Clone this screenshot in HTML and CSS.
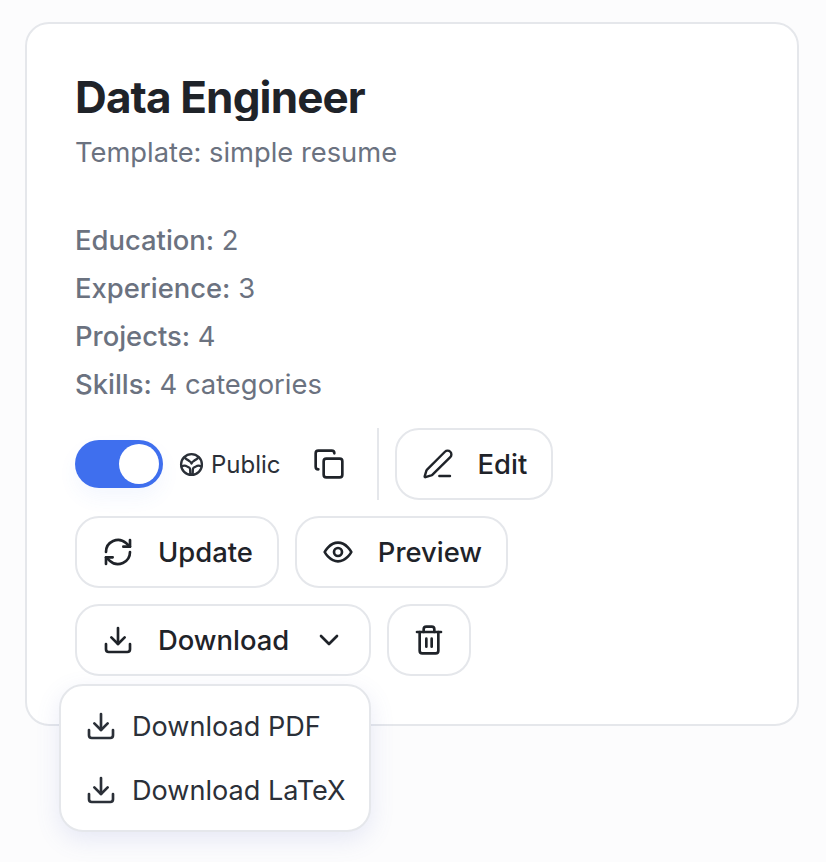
FILE: index.html
```html
<!DOCTYPE html>
<html lang="en">
<head>
<meta charset="utf-8">
<title>Data Engineer</title>
<link rel="stylesheet" href="styles.css">
</head>
<body>
<main class="card">
  <h1 class="title">Data Engineer</h1>
  <p class="template">Template: simple resume</p>
  <ul class="stats">
    <li><span class="label">Education:</span> 2</li>
    <li><span class="label">Experience:</span> 3</li>
    <li><span class="label">Projects:</span> 4</li>
    <li><span class="label">Skills:</span> 4 categories</li>
  </ul>
  <div class="actions">
    <div class="visibility">
      <span class="switch"><span class="knob"></span></span>
      <span class="public">
        <svg class="icon-globe" viewBox="0 0 24 24" fill="none" stroke="currentColor" stroke-width="2.200" stroke-linecap="round" stroke-linejoin="round"><circle cx="12" cy="12" r="10"/><path d="M5.500 5c1 2.500 2.500 2 3.500 3s2 1 3 3c1-2 2-2 3-3s2.500-.5 3.500-3"/><path d="M2.500 14c2-1.500 4-1 5.500 0s2 .5 2.500 2 0 3 .5 5.500M21.500 14c-2-1.500-4-1-5.500 0s-2 .5-2.500 2 0 3-.5 5.500"/></svg>
        Public
      </span>
      <button class="icon-only" aria-label="Copy">
        <svg class="icon" viewBox="0 0 24 24" fill="none" stroke="currentColor" stroke-width="2" stroke-linecap="round" stroke-linejoin="round"><rect x="8" y="8" width="14" height="14" rx="2"/><path d="M4 16c-1.100 0-2-.9-2-2V4c0-1.100.9-2 2-2h10c1.100 0 2 .9 2 2"/></svg>
      </button>
      <span class="divider"></span>
    </div>
    <button class="btn">
      <svg class="icon" viewBox="0 0 24 24" fill="none" stroke="currentColor" stroke-width="1.800" stroke-linecap="round" stroke-linejoin="round"><path d="M13 21h8"/><path d="M21.200 6.800a2.800 2.800 0 0 0-4-4L3.800 16.200a2 2 0 0 0-.5.8l-1.300 4.300a.5.5 0 0 0 .6.6l4.300-1.300a2 2 0 0 0 .8-.5z"/></svg>
      Edit
    </button>
    <button class="btn">
      <svg class="icon" viewBox="0 0 24 24" fill="none" stroke="currentColor" stroke-width="2" stroke-linecap="round" stroke-linejoin="round"><path d="M3 12a9 9 0 0 1 15-6.700L21 8"/><path d="M21 3v5h-5"/><path d="M21 12a9 9 0 0 1-15 6.700L3 16"/><path d="M8 16H3v5"/></svg>
      Update
    </button>
    <button class="btn">
      <svg class="icon" viewBox="0 0 24 24" fill="none" stroke="currentColor" stroke-width="2" stroke-linecap="round" stroke-linejoin="round"><path d="M2 12s3.600-7 10-7 10 7 10 7-3.600 7-10 7-10-7-10-7z"/><circle cx="12" cy="12" r="3"/></svg>
      Preview
    </button>
    <div class="download">
      <button class="btn">
        <svg class="icon" viewBox="0 0 24 24" fill="none" stroke="currentColor" stroke-width="2" stroke-linecap="round" stroke-linejoin="round"><path d="M21 15v4a2 2 0 0 1-2 2H5a2 2 0 0 1-2-2v-4"/><path d="M7 10l5 5 5-5"/><path d="M12 15V3"/></svg>
        Download
        <svg class="icon" viewBox="0 0 24 24" fill="none" stroke="currentColor" stroke-width="2" stroke-linecap="round" stroke-linejoin="round"><path d="M6 9l6 6 6-6"/></svg>
      </button>
      <div class="menu">
        <div class="menu-item">
          <svg class="icon" viewBox="0 0 24 24" fill="none" stroke="currentColor" stroke-width="2" stroke-linecap="round" stroke-linejoin="round"><path d="M21 15v4a2 2 0 0 1-2 2H5a2 2 0 0 1-2-2v-4"/><path d="M7 10l5 5 5-5"/><path d="M12 15V3"/></svg>
          Download PDF
        </div>
        <div class="menu-item">
          <svg class="icon" viewBox="0 0 24 24" fill="none" stroke="currentColor" stroke-width="2" stroke-linecap="round" stroke-linejoin="round"><path d="M21 15v4a2 2 0 0 1-2 2H5a2 2 0 0 1-2-2v-4"/><path d="M7 10l5 5 5-5"/><path d="M12 15V3"/></svg>
          Download LaTeX
        </div>
      </div>
    </div>
    <button class="btn btn-square" aria-label="Delete">
      <svg class="icon" viewBox="0 0 24 24" fill="none" stroke="currentColor" stroke-width="2" stroke-linecap="round" stroke-linejoin="round"><path d="M3 6h18"/><path d="M19 6v14a2 2 0 0 1-2 2H7a2 2 0 0 1-2-2V6"/><path d="M8 6V4a2 2 0 0 1 2-2h4a2 2 0 0 1 2 2v2"/><path d="M10 11v6M14 11v6"/></svg>
    </button>
  </div>
</main>
</body>
</html>
```

FILE: styles.css
```css
* { box-sizing: border-box; }
html, body { height: 100%; }
body {
  margin: 0;
  padding: 22px 27px 0 25px;
  background: #fcfcfd;
  font-family: Inter, "Liberation Sans", sans-serif;
  color: #1f2329;
}
.card {
  width: 774px;
  height: 704px;
  padding: 49px 48px;
  background: #fff;
  border: 2px solid #e5e7eb;
  border-radius: 24px;
}
.title {
  margin: 0;
  height: 48px;
  overflow: hidden;
  font-size: 44px;
  line-height: 48px;
  font-weight: 700;
  letter-spacing: -.87px;
}
.template {
  margin: 12px 0 0;
  font-size: 27.300px;
  line-height: 40px;
  color: #6b7280;
}
.stats {
  list-style: none;
  margin: 43px 0 0;
  padding: 0;
  font-size: 27.400px;
  line-height: 48px;
  color: #6b7280;
}
.label { font-weight: 500; }
.actions {
  display: flex;
  flex-wrap: wrap;
  gap: 16px;
  margin-top: 20px;
}
.visibility { display: flex; align-items: center; }
.switch {
  display: flex;
  align-items: center;
  justify-content: flex-end;
  width: 88px;
  height: 48px;
  padding: 4px;
  border-radius: 24px;
  background: #3f6fee;
  box-shadow: 0 10px 20px rgba(63, 111, 238, .06);
}
.knob { width: 40px; height: 40px; border-radius: 50%; background: #fff; }
.public {
  display: flex;
  align-items: center;
  gap: 7px;
  margin-left: 16px;
  font-size: 24px;
  font-weight: 400;
  color: #2b3038;
}
.icon-globe { width: 25px; height: 25px; }
.icon { width: 32px; height: 32px; flex: none; }
.icon-only {
  display: flex;
  padding: 0;
  margin-left: 32px;
  border: 0;
  background: none;
  color: inherit;
}
.divider { width: 2px; height: 72px; margin-left: 32px; background: #e5e7eb; }
.btn {
  display: flex;
  align-items: center;
  gap: 24px;
  height: 72px;
  padding: 0 24px 0 25px;
  background: #fff;
  border: 2px solid #e5e7eb;
  border-radius: 24px;
  font: 500 27.400px/40px Inter, "Liberation Sans", sans-serif;
  color: inherit;
}
.btn-square { width: 84px; padding: 0; justify-content: center; }
.download { position: relative; }
.menu {
  position: absolute;
  top: 80px;
  left: -16px;
  width: 312px;
  padding: 8px 0;
  background: #fff;
  border: 2px solid #e5e7eb;
  border-radius: 24px;
  box-shadow: 0 8px 24px rgba(99, 115, 200, .14);
}
.menu-item {
  display: flex;
  align-items: center;
  gap: 15px;
  height: 64px;
  padding-left: 24px;
  font-size: 27.100px;
  white-space: nowrap;
  color: #2b3038;
}
```
